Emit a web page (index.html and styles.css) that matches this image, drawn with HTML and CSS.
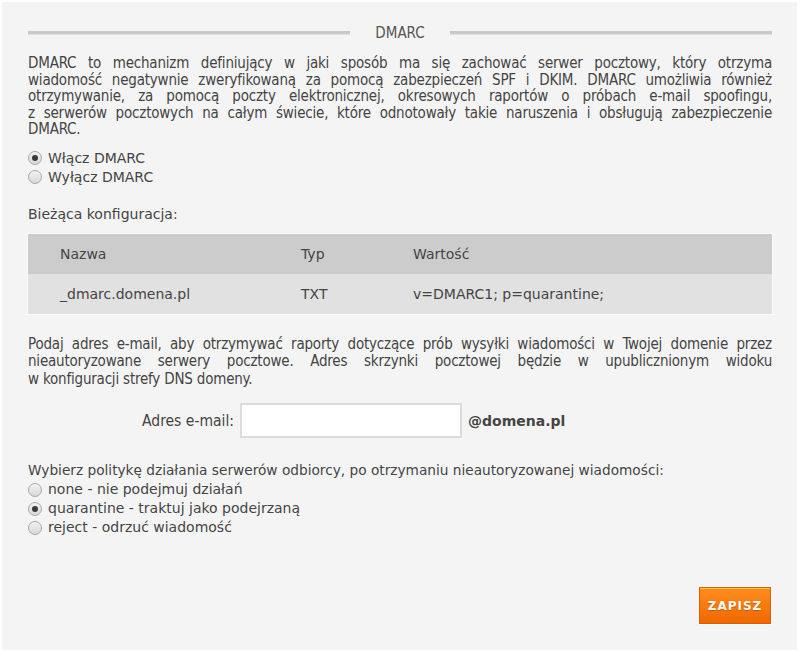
FILE: index.html
```html
<!DOCTYPE html>
<html lang="pl">

<head>
    <meta charset="UTF-8">
    <title>DMARC</title>
    <link rel="stylesheet" href="styles.css">
</head>

<body>
    <div class="panel">
        <!-- Naglowek -->
        <div class="naglowek">
            <span class="linia"></span>
            <h2>DMARC</h2>
            <span class="linia"></span>
        </div>

        <!-- linie rozbite recznie, zeby lamanie bylo takie jak w panelu -->
        <p class="opis">
            <span>DMARC to mechanizm definiujący w jaki sposób ma się zachować serwer pocztowy, który otrzyma</span>
            <span>wiadomość negatywnie zweryfikowaną za pomocą zabezpieczeń SPF i DKIM. DMARC umożliwia również</span>
            <span>otrzymywanie, za pomocą poczty elektronicznej, okresowych raportów o próbach e-mail spoofingu,</span>
            <span>z serwerów pocztowych na całym świecie, które odnotowały takie naruszenia i obsługują zabezpieczenie</span>
            <span>DMARC.</span>
        </p>

        <div class="opcje">
            <label><input type="radio" name="stan" checked> Włącz DMARC</label>
            <label><input type="radio" name="stan"> Wyłącz DMARC</label>
        </div>

        <div class="etykieta">Bieżąca konfiguracja:</div>

        <div class="tabela">
            <div class="wiersz naglowek-tabeli">
                <div>Nazwa</div>
                <div>Typ</div>
                <div>Wartość</div>
            </div>
            <div class="wiersz">
                <div>_dmarc.domena.pl</div>
                <div>TXT</div>
                <div>v=DMARC1; p=quarantine;</div>
            </div>
        </div>

        <p class="opis opis-email">
            <span>Podaj adres e-mail, aby otrzymywać raporty dotyczące prób wysyłki wiadomości w Twojej domenie przez</span>
            <span>nieautoryzowane serwery pocztowe. Adres skrzynki pocztowej będzie w upublicznionym widoku</span>
            <span>w konfiguracji strefy DNS domeny.</span>
        </p>

        <div class="pole-email">
            <label for="email">Adres e-mail:</label>
            <input type="text" id="email">
            <span class="domena">@domena.pl</span>
        </div>

        <div class="etykieta etykieta-polityka">Wybierz politykę działania serwerów odbiorcy, po otrzymaniu nieautoryzowanej wiadomości:</div>
        <div class="opcje opcje-polityka">
            <label><input type="radio" name="polityka"> none - nie podejmuj działań</label>
            <label><input type="radio" name="polityka" checked> quarantine - traktuj jako podejrzaną</label>
            <label><input type="radio" name="polityka"> reject - odrzuć wiadomość</label>
        </div>

        <div class="akcje">
            <button type="button" class="btn-zapisz">ZAPISZ</button>
        </div>
    </div>
</body>

</html>
```

FILE: styles.css
```css
body {
    margin: 0;
    background: #fff;
    font-family: "DejaVu Sans", Verdana, sans-serif;
    font-size: 14px;
    color: #444;
}

.panel {
    margin: 2px 3px 3px 2px;
    height: 648px;
    box-sizing: border-box;
    background: #f4f4f4;
    padding: 22px 25px 0 26px;
}

.naglowek {
    display: flex;
    align-items: center;
    gap: 25px;
    height: 18px;
}

.linia {
    flex: 1;
    height: 3px;
    background: #c9c9c9;
    border-bottom: 1px solid #e2e2e2;
}

.naglowek h2 {
    margin: 0;
    font-family: "DejaVu Sans Condensed", sans-serif;
    font-weight: normal;
    font-size: 15px;
    color: #555;
}

.opis {
    margin: 13px 0 0;
    font-family: "DejaVu Sans Condensed", sans-serif;
    font-size: 15px;
    letter-spacing: -0.2px;
    line-height: 16.5px;
    color: #444;
}

.opis span {
    display: block;
    white-space: nowrap;
    text-align: justify;
    text-align-last: justify;
}

.opis span:last-child {
    text-align-last: left;
}

.opcje {
    margin-top: 11px;
    display: flex;
    flex-direction: column;
}

.opcje label {
    display: flex;
    align-items: center;
    gap: 6px;
    line-height: 19px;
}

.opcje input {
    appearance: none;
    margin: 0;
    width: 14px;
    height: 14px;
    border-radius: 50%;
    border: 1px solid #a8a8a8;
    background: linear-gradient(#f2f2f2, #d8d8d8);
    box-sizing: border-box;
    display: grid;
    place-items: center;
}

.opcje input:checked::after {
    content: "";
    width: 6px;
    height: 6px;
    border-radius: 50%;
    background: #3a3a3a;
}

.etykieta {
    margin-top: 18px;
    line-height: 19px;
}

.tabela {
    margin-top: 10px;
    outline: 1px solid #fbfbfb;
}

.wiersz {
    display: grid;
    grid-template-columns: 241px 112px 1fr;
    height: 40px;
    align-items: center;
    background: #e1e1e1;
}

.wiersz div {
    padding-left: 32px;
}

.naglowek-tabeli {
    background: #cccccc;
}

.opis-email {
    margin-top: 22px;
    line-height: 17.5px;
}

.pole-email {
    margin-top: 15px;
    display: flex;
    align-items: center;
    height: 35px;
}

.pole-email label {
    width: 206px;
    text-align: right;
    font-family: "DejaVu Sans Condensed", sans-serif;
    font-size: 15.5px;
}

.pole-email input {
    margin: 0 6px;
    width: 222px;
    height: 35px;
    box-sizing: border-box;
    border: 2px solid #dcdcdc;
    background: #fff;
}

.domena {
    font-weight: bold;
}

.etykieta-polityka {
    margin-top: 23px;
    font-size: 13.7px;
}

.opcje-polityka {
    margin-top: 0;
}

.akcje {
    margin-top: 50px;
    display: flex;
    justify-content: flex-end;
    padding-right: 1px;
}

.btn-zapisz {
    width: 72px;
    height: 37px;
    border: 1px solid #e05a00;
    box-shadow: inset 0 1px 0 #ffc24a, 0 0 0 1px #fff;
    background: linear-gradient(#ff8d1e, #f06800);
    color: #fff;
    font-family: "DejaVu Sans", sans-serif;
    font-weight: bold;
    font-size: 12px;
    letter-spacing: 1px;
    text-shadow: 0 1px 1px rgba(150, 60, 0, 0.5);
    cursor: pointer;
}
```
